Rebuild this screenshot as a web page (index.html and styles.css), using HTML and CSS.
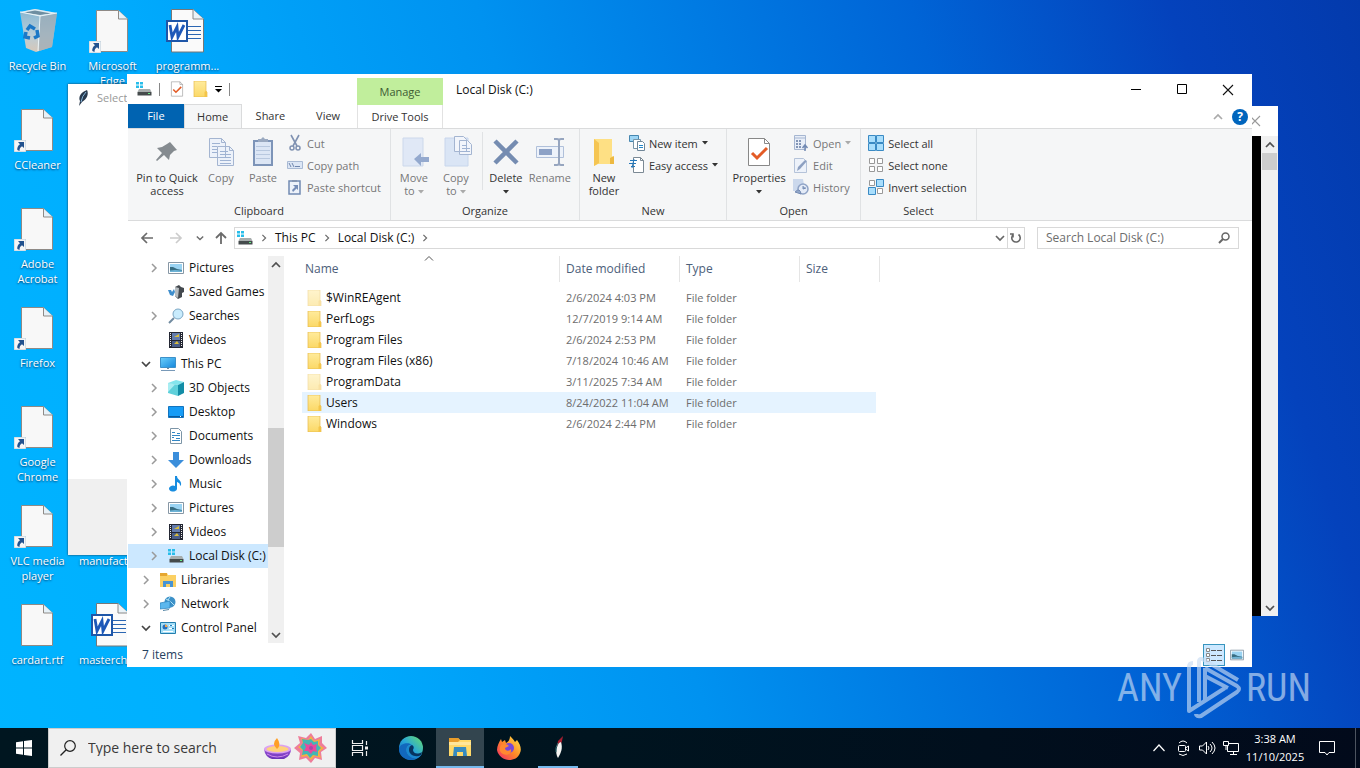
FILE: index.html
```html
<!DOCTYPE html>
<html lang="en">
<head>
<meta charset="utf-8">
<title>Local Disk (C:)</title>
<link rel="stylesheet" href="styles.css">
</head>
<body>
<svg class="defs" aria-hidden="true">
  <defs>
    <linearGradient id="gBlue" x1="0" y1="0" x2="1" y2="1"><stop offset="0" stop-color="#6cd0fb"/><stop offset="1" stop-color="#1687dc"/></linearGradient>
    <linearGradient id="gFolder" x1="0" y1="0" x2="0" y2="1"><stop offset="0" stop-color="#ffeb9c"/><stop offset="1" stop-color="#fbd866"/></linearGradient>
    <linearGradient id="gBin" x1="0" y1="0" x2="0" y2="1"><stop offset="0" stop-color="#8cb6cf"/><stop offset=".6" stop-color="#c3cfd6"/><stop offset="1" stop-color="#e2c9b5"/></linearGradient>
    <linearGradient id="gEdge" x1="0" y1="1" x2="1" y2="0"><stop offset="0" stop-color="#0f5fb8"/><stop offset=".5" stop-color="#27a6d8"/><stop offset="1" stop-color="#6be06a"/></linearGradient>
    <linearGradient id="gFox" x1="1" y1="0" x2="0" y2="1"><stop offset="0" stop-color="#ffe84a"/><stop offset=".5" stop-color="#ff8a28"/><stop offset="1" stop-color="#f0246c"/></linearGradient>
    <linearGradient id="gBowl" x1="0" y1="0" x2="0" y2="1"><stop offset="0" stop-color="#a65ce0"/><stop offset="1" stop-color="#6b34b8"/></linearGradient>
  </defs>
  <symbol id="page" viewBox="6 0 48 44">
    <path d="M13.500 1.500h22l9 8.500v32.500h-31z" fill="#f8f8f8" stroke="#8f8a86"/>
    <path d="M35.500 1.500v8.500h9" fill="#e6f1f8" stroke="#8f8a86"/>
  </symbol>
  <symbol id="arrow" viewBox="0 0 12 12">
    <path d="M0 0h12v12H0z" fill="#f6f6f6" stroke="#b9cbd8"/>
    <path d="M4 2h6v6L8 6.300C6 7.500 5.500 9 5.500 11L3.300 10C3 7.500 4 5.500 6 4.200z" fill="#22528f"/>
  </symbol>
  <symbol id="word" viewBox="6 0 48 44">
    <path d="M13.500 .5h21.500l10.500 9.500v33h-32z" fill="#fafafa" stroke="#777"/>
    <path d="M35 .5v9.500h10.500" fill="#eaf3f8" stroke="#888"/>
    <path d="M30 17.500h13M30 21.500h13M30 25.500h13M30 29.500h13" stroke="#2b66b2"/>
    <path d="M9 12h20v20H9z" fill="#fff" stroke="#1e56a8" stroke-width="2"/>
    <path d="M12 16l2 12 5-10 1 10 6-12" fill="none" stroke="#1d58b8" stroke-width="2.800"/>
  </symbol>
  <symbol id="drive" viewBox="0 0 16 16">
    <path d="M0 1h3v2.500H0zM4 1h3v2.500H4zM0 4.500h3V7H0zM4 4.500h3V7H4z" fill="#28bdea"/>
    <path d="M3 8h11l1.500 3H1.500z" fill="#a7adad"/><path d="M1.500 11H15.500v3.500H1.500z" fill="#454b4c"/><path d="M12 12h2v1h-2z" fill="#66ee85"/>
  </symbol>
  <symbol id="folder" viewBox="0 0 16 16"><path d="M2 0h12v10l1 1v5H2z" fill="url(#gFolder)" stroke="#e6b94c" stroke-width=".7"/><path d="M12.500 16v-5l1-1 1.500 1v5z" fill="#f4c549"/></symbol>
  <symbol id="pic" viewBox="0 0 16 16"><path d="M.5 2.500h15v11H.5z" fill="#fff" stroke="#8797a5"/><path d="M2 4h12v8H2z" fill="#9ad3f2"/><path d="M2 7l3 0 4 2 5 1v2H2z" fill="#376d82"/><path d="M2 10.500l5-.5 7 .5V12H2z" fill="#6db3d6"/></symbol>
  <symbol id="games" viewBox="0 0 16 16"><path d="M7 3l4-2 2 2 3 1v4l-2 1v4l-4 2-3-3z" fill="#43494e"/><path d="M7 3l4 1-1 10-3-2z" fill="#b7bdc1"/><path d="M0 6h3l1 2 2-3 1 3-2 4-3-1z" fill="#3f8ecc"/></symbol>
  <symbol id="search" viewBox="0 0 16 16"><path d="M6 10l-5 5" stroke="#718ba0" stroke-width="2"/><circle cx="10" cy="6" r="5" fill="#c9ecfd" stroke="#7ca7c4"/></symbol>
  <symbol id="video" viewBox="0 0 16 16"><path d="M1 0h14v16H1z" fill="#232733"/><path d="M4 1h8v7H4z" fill="#637cad"/><path d="M4 9h8v6H4z" fill="#4a5e88"/><path d="M6 5l5-3v3zM6 12l3-3 2 3z" fill="#d9be3d"/><path d="M2.500 1v14M13.500 1v14" stroke="#eee" stroke-dasharray="1 1"/></symbol>
  <symbol id="pc" viewBox="0 0 16 16"><path d="M.5 1.500h15v10H.5z" fill="url(#gBlue)" stroke="#3d91c9"/><path d="M7 12h2v1H7z" fill="#789"/><path d="M1 14.500h14" stroke="#7899b8"/></symbol>
  <symbol id="cube" viewBox="0 0 16 16"><path d="M0 3l8-3 8 2-6 3z" fill="#84e5ed"/><path d="M0 3l10 2v11L0 13z" fill="#5fd0da"/><path d="M10 5l6-3v11l-6 3z" fill="#128da6"/><path d="M0 3l7 1.500L0 12z" fill="#a9edf2"/></symbol>
  <symbol id="desk" viewBox="0 0 16 16"><path d="M.5 2.500h15v11H.5z" fill="#169cf6" stroke="#1374be"/><path d="M1 12.500h14" stroke="#095a9d"/><path d="M12 12.500h2" stroke="#fff" stroke-dasharray="1"/></symbol>
  <symbol id="doc" viewBox="0 0 16 16"><path d="M2.500 .5h8l3 3v12h-11z" fill="#fff" stroke="#7c95a7"/><path d="M4 4.500h3M9 5.500h3M4 7.500h8M4 9.500h2M8 10.500h4M4 12.500h8" stroke="#3287c5"/></symbol>
  <symbol id="down" viewBox="0 0 16 16"><path d="M5 0h6v8h5l-8 8-8-8h5z" fill="#3b8edb"/></symbol>
  <symbol id="music" viewBox="0 0 16 16"><path d="M7 0h2c0 4 5 4 4 9l-1 1c0-3-1-3-3-4v7a4 3 0 1 1-2-3z" fill="#188de0"/></symbol>
  <symbol id="lib" viewBox="0 0 16 16"><path d="M0 1h7l1 2h8v12H0z" fill="#fbd063"/><path d="M0 1h7v3H0z" fill="#e6a731"/><path d="M3 9h10v6h-3v-3H6v3H3z" fill="#4794d4"/></symbol>
  <symbol id="net" viewBox="0 0 16 16"><circle cx="10" cy="6" r="5.500" fill="#3c91c8"/><path d="M6 3q4 1 8 6M10 1q-4 4 0 10" stroke="#b3e4f7" fill="none"/><path d="M0 7l10-2v7L0 13z" fill="#5bb7ee" stroke="#2a80bb" stroke-width=".7"/><path d="M3 14.500l6-1" stroke="#5585a5"/></symbol>
  <symbol id="panel" viewBox="0 0 16 16"><path d="M.5 2.500h15v11H.5z" fill="#a4def7" stroke="#237eae"/><circle cx="5" cy="7" r="2.500" fill="#276fbb"/><path d="M5 7V4.500A2.500 2.500 0 0 1 7.500 7z" fill="#f6a548"/><path d="M9 5.500h5M9 8.500h5M3 11.500h10" stroke="#fff"/><path d="M10 5.500h2M12 8.500h2" stroke="#277ebd"/></symbol>
  <symbol id="right" viewBox="0 0 10 10"><path d="M3 1l4 4-4 4" fill="none" stroke="currentColor" stroke-width="1.500"/></symbol>
  <symbol id="dn" viewBox="0 0 10 10"><path d="M1 3l4 4 4-4" fill="none" stroke="currentColor" stroke-width="1.700"/></symbol>
  <symbol id="up" viewBox="0 0 10 10"><path d="M1 7l4-4 4 4" fill="none" stroke="currentColor" stroke-width="1.700"/></symbol>
  <symbol id="x" viewBox="0 0 12 12"><path d="M1 1l10 10M11 1L1 11" fill="none" stroke="currentColor" stroke-width="1.100"/></symbol>
  <symbol id="tri" viewBox="0 0 6 4"><path d="M0 0h6L3 3.500z" fill="currentColor"/></symbol>
  <symbol id="back" viewBox="0 0 14 12"><path d="M13 6H2M7 1L2 6l5 5" fill="none" stroke="currentColor" stroke-width="1.700"/></symbol>
  <symbol id="check" viewBox="0 0 22 30"><path d="M.5 1.500h16l5 5v22H.5z" fill="#fff" stroke="#888"/><path d="M16.500 1.500v5h5" fill="none" stroke="#888"/><path d="M4 16l5 5 10-10" fill="none" stroke="#e35b26" stroke-width="3"/></symbol>
</svg>

<div class="desktop">
  <main class="surface">
    <div class="icons">
      <button class="shortcut"><svg class="art" viewBox="0 0 48 44"><path d="M6 3l15-3 22 4-5 34-16 5-10-4z" fill="url(#gBin)" opacity=".95"/><path d="M6 3l15-3 22 4-17 3z" fill="#dcecf3"/><path d="M10 3.500l11-2 16 3-11 1.500z" fill="#6e8ea1"/><path d="M26 7l17-3-5 34-13 4z" fill="#9ba9b3" opacity=".7"/><path d="M6 3l20 4 17-3M26 7l-2 35" fill="none" stroke="#eaf4f8"/><path d="M13 21l3-4 5 3M23 21l1 6-4 2M16 29l-5-1 1-5" fill="none" stroke="#1c78c6" stroke-width="3.500"/></svg><span>Recycle Bin</span></button>
      <button class="shortcut"><svg class="art"><use href="#page"/><use href="#arrow" x="0" y="32" width="12" height="12"/></svg><span>CCleaner</span></button>
      <button class="shortcut"><svg class="art"><use href="#page"/><use href="#arrow" x="0" y="32" width="12" height="12"/></svg><span>Adobe Acrobat</span></button>
      <button class="shortcut"><svg class="art"><use href="#page"/><use href="#arrow" x="0" y="32" width="12" height="12"/></svg><span>Firefox</span></button>
      <button class="shortcut"><svg class="art"><use href="#page"/><use href="#arrow" x="0" y="32" width="12" height="12"/></svg><span>Google Chrome</span></button>
      <button class="shortcut"><svg class="art"><use href="#page"/><use href="#arrow" x="0" y="32" width="12" height="12"/></svg><span>VLC media player</span></button>
      <button class="shortcut"><svg class="art"><use href="#page"/></svg><span>cardart.rtf</span></button>
      <button class="shortcut col-two"><svg class="art"><use href="#page"/><use href="#arrow" x="0" y="32" width="12" height="12"/></svg><span>Microsoft Edge</span></button>
      <button class="shortcut col-two row-six"><svg class="art"><use href="#page"/></svg><span>manufacturer...</span></button>
      <button class="shortcut col-two row-seven"><svg class="art"><use href="#word"/></svg><span>masterchea...</span></button>
      <button class="shortcut col-three"><svg class="art"><use href="#word"/></svg><span>programm...</span></button>
    </div>

    <section class="tool-window">
      <header><svg class="feather" viewBox="0 0 12 16"><path d="M10 0c2 4 0 9-5 12L2 16l1-5C1 7 4 2 10 0z" fill="#28394d"/><path d="M9 2Q5 6 4 12" stroke="#86b7dc" fill="none"/></svg><span>Select</span></header>
      <div class="tool-body"></div>
    </section>

    <section class="console">
      <header><button aria-label="Close console"><svg class="i12"><use href="#x"/></svg></button></header>
      <div class="console-body"><div class="scroll"><button aria-label="Scroll console up"><svg class="i10"><use href="#up"/></svg></button><div class="console-thumb"></div><button class="scroll-end" aria-label="Scroll console down"><svg class="i10"><use href="#dn"/></svg></button></div></div>
    </section>

    <section class="explorer">
      <header class="head">
        <div class="left-head">
          <div class="quick">
            <svg class="i16"><use href="#drive"/></svg><i class="bar"></i>
            <button aria-label="Properties"><svg class="i16"><use href="#check"/></svg></button>
            <button aria-label="New folder"><svg class="i16"><use href="#folder"/></svg></button>
            <button class="customize" aria-label="Customize Quick Access Toolbar"><svg viewBox="0 0 7 8"><path d="M0 1.500h7" stroke="#000"/><path d="M0 4h7L3.500 7.500z"/></svg></button><i class="bar"></i>
          </div>
          <div class="tabs"><button class="tab file">File</button><button class="tab home">Home</button><button class="tab">Share</button><button class="tab">View</button></div>
        </div>
        <div class="context"><div class="manage">Manage</div><button class="tab drive-tab">Drive Tools</button></div>
        <div class="right-head">
          <div class="title-row"><h1>Local Disk (C:)</h1>
            <div class="controls"><button aria-label="Minimize"><svg class="i12" viewBox="0 0 12 12"><path d="M1 5.500h10" stroke="#000"/></svg></button><button aria-label="Maximize"><svg class="i12" viewBox="0 0 12 12"><path d="M1.500 .5h9v9h-9z" fill="none" stroke="#000"/></svg></button><button aria-label="Close"><svg class="i12"><use href="#x"/></svg></button></div></div>
          <div class="help-row"><button class="collapse" aria-label="Minimize the Ribbon"><svg class="i10"><use href="#up"/></svg></button><button class="help" aria-label="Help">?</button></div>
        </div>
      </header>

      <div class="ribbon">
        <section class="group"><div class="tools">
          <button class="big w-pin"><svg viewBox="0 0 32 32"><path d="M19 6l7 8-3 1-4 4-1 5-5-5-7 6-1-1 6-7-5-5 5-1 5-3z" fill="#858b90"/></svg><span>Pin to Quick access</span></button>
          <button class="big w-copy off"><svg viewBox="0 0 32 32"><path d="M4.500 2.500h12l4 4v15h-16zM12.500 10.500h12l4 4v15h-16z" fill="#edf2fa" stroke="#a4b5d1"/><path d="M7 7.500h8M7 10.500h5M7 13.500h5M7 16.500h5M15 15.500h8M15 18.500h11M15 21.500h11M15 24.500h11M15 27.500h11" stroke="#9fb3d3"/><path d="M16.500 2.500v4h4M24.500 10.500v4h4" fill="none" stroke="#a4b5d1"/></svg><span>Copy</span></button>
          <button class="big w-paste off"><svg viewBox="0 0 32 32"><path d="M7 5h18v24H7z" fill="#dce6f5" stroke="#7d94b8" stroke-width="2"/><path d="M11 6V3h3l2-2 2 2h3v3z" fill="#9aa9c0"/><path d="M9 10.500h14M9 14.500h14M9 18.500h14M9 22.500h14" stroke="#b8c8df"/></svg><span>Paste</span></button>
          <div class="stack">
            <button class="small off"><svg class="i16" viewBox="0 0 16 16"><path d="M4 0l6 11M12 0L6 11" stroke="#8092b2" stroke-width="1.600"/><circle cx="5" cy="13" r="2" fill="none" stroke="#8092b2" stroke-width="1.500"/><circle cx="11" cy="13" r="2" fill="none" stroke="#8092b2" stroke-width="1.500"/></svg>Cut</button>
            <button class="small off"><svg class="i16" viewBox="0 0 16 16"><path d="M.5 4.500h15v7H.5z" fill="#dce6f5" stroke="#a9bad4"/><path d="M2 6l2 4M5 6l2 4M8 9.500h6" stroke="#6f86ae" stroke-dasharray="5 1"/></svg>Copy path</button>
            <button class="small off"><svg class="i16" viewBox="0 0 16 16"><path d="M2 2h11v13H2z" fill="#edf2fa" stroke="#718ab2" stroke-width="1.500"/><path d="M5 1h5v2H5z" fill="#8596b2"/><path d="M6 6h5v5L9.500 9.500 6 13l-1-2 3-3z" fill="#758db7"/></svg>Paste shortcut</button>
          </div></div><h2>Clipboard</h2></section>

        <section class="group"><div class="tools pad-organize">
          <button class="big w-move off"><svg viewBox="0 0 32 32"><path d="M5 2h20v28H5z" fill="#e0e8f6" stroke="#ccd8eb"/><path d="M16 23l7-6v4h8v5h-8v4z" fill="#94a9ce"/></svg><span>Move<br>to <svg class="tri"><use href="#tri"/></svg></span></button>
          <button class="big w-move off"><svg viewBox="0 0 32 32"><path d="M5 2h23v28H5z" fill="#dae5f5" stroke="#c8d6ec"/><path d="M14.500 .5h9l3 3v12h-12zM19.500 4.500h8l4 4v10h-12z" fill="#f2f5fb" stroke="#a4b5d1"/><path d="M22 9.500h5M22 12.500h8M22 15.500h8" stroke="#9fb3d3"/></svg><span>Copy<br>to <svg class="tri"><use href="#tri"/></svg></span></button>
          <i class="divider"></i>
          <button class="big w-delete"><svg viewBox="0 0 32 32"><path d="M5 5l22 22M27 5L5 27" stroke="#758cb1" stroke-width="4.500"/></svg><span>Delete<br><svg class="tri"><use href="#tri"/></svg></span></button>
          <button class="big w-move off"><svg viewBox="0 0 32 32"><path d="M2.500 10.500h27v11h-27z" fill="#edf2fa" stroke="#b0c0da"/><path d="M5 13h13v6H5z" fill="#8ca1c6"/><path d="M20 3h3q2 0 2 2v22q0 2-2 2h-3M30 3h-3q-2 0-2 2M25 27q0 2 2 2h3" stroke="#96a5bf" fill="none" stroke-width="2"/></svg><span>Rename</span></button>
          </div><h2>Organize</h2></section>

        <section class="group"><div class="tools">
          <button class="big w-folder"><svg viewBox="0 0 32 32"><path d="M6 3h18v17l2 2v6H10l-4 2z" fill="#fee084"/><path d="M6 3l5 4v20l-5 3z" fill="#f5c553"/><path d="M22 22l4-2v8h-4z" fill="#edb941"/></svg><span>New folder</span></button>
          <div class="stack pad-new">
            <button class="small"><svg class="i16" viewBox="0 0 16 16"><path d="M.5 .5h9v6h-9z" fill="#9dd5f5" stroke="#4687b0"/><path d="M4.500 4.500h7v9h-7z" fill="#fff" stroke="#7695a8"/><path d="M8.500 6.500h5l2 2v7h-7z" fill="#fff" stroke="#708698"/><path d="M10 10.500h4M10 12.500h4" stroke="#2587c9"/></svg>New item<svg class="tri"><use href="#tri"/></svg></button>
            <button class="small"><svg class="i16" viewBox="0 0 16 16"><path d="M4.500 .5h7l3 3v12h-10z" fill="#fff" stroke="#7b8994"/><path d="M11.500 .5v3h3" fill="none" stroke="#7b8994"/><path d="M1 3.500h7M0 6.500h7M2 9.500h4M5 2l-2 9" stroke="#2678b9"/></svg>Easy access<svg class="tri"><use href="#tri"/></svg></button>
          </div></div><h2>New</h2></section>

        <section class="group"><div class="tools">
          <button class="big w-properties"><svg class="property"><use href="#check"/></svg><span>Properties<br><svg class="tri"><use href="#tri"/></svg></span></button>
          <div class="stack pad-open">
            <button class="small off"><svg class="i16" viewBox="0 0 16 16"><path d="M1.500 .5h11v14h-11z" fill="#e8eef8" stroke="#a6b6d1"/><path d="M2 3h10" stroke="#a6b6d1"/><path d="M4 5v8M7 5v8" stroke="#8396b7" stroke-width="2" stroke-dasharray="2 1"/><path d="M12 16v-5M9.500 13l2.500-3 2.500 3" fill="none" stroke="#7189b3" stroke-width="1.500"/></svg>Open<svg class="tri"><use href="#tri"/></svg></button>
            <button class="small off"><svg class="i16" viewBox="0 0 16 16"><path d="M1.500 1.500h9l3 3v11h-12z" fill="#edf2fa" stroke="#b5c3d9"/><path d="M14 4l-7 8-3 2 1-4 7-7z" fill="#8da0c1"/></svg>Edit</button>
            <button class="small off"><svg class="i16" viewBox="0 0 16 16"><path d="M0 0h10l2 12H0z" fill="#cbd8ec"/><circle cx="10" cy="10" r="5" fill="#e4ebf7" stroke="#8fa3c6" stroke-width="1.500"/><path d="M10 7v3l3-1M2 13q5-5 6 2z" stroke="#768cb3" fill="#91a7ca"/></svg>History</button>
          </div></div><h2>Open</h2></section>

        <section class="group"><div class="tools"><div class="stack pad-select">
          <button class="small"><svg class="i16" viewBox="0 0 16 16"><path d="M.5 .5h7v7h-7zM8.500 .5h7v7h-7zM.5 8.500h7v7h-7zM8.500 8.500h7v7h-7z" fill="#a9defc" stroke="#3a8ac4"/></svg>Select all</button>
          <button class="small"><svg class="i16" viewBox="0 0 16 16"><path d="M1.500 1.500h5v5h-5zM9.500 1.500h5v5h-5zM1.500 9.500h5v5h-5zM9.500 9.500h5v5h-5z" fill="#fff" stroke="#999"/></svg>Select none</button>
          <button class="small"><svg class="i16" viewBox="0 0 16 16"><path d="M1.500 1.500h5v5h-5zM9.500 9.500h5v5h-5z" fill="#fff" stroke="#999"/><path d="M8.500 .5h7v7h-7zM.5 8.500h7v7h-7z" fill="#a9defc" stroke="#3a8ac4"/></svg>Invert selection</button>
        </div></div><h2>Select</h2></section>
      </div>

      <div class="address-row">
        <button class="nav-button" aria-label="Back"><svg class="arrow"><use href="#back"/></svg></button>
        <button class="nav-button forward" aria-label="Forward"><svg class="arrow" viewBox="0 0 14 12"><path d="M1 6h11M7 1l5 5-5 5" fill="none" stroke="currentColor" stroke-width="1.700"/></svg></button>
        <button class="recent" aria-label="Recent locations"><svg class="i8"><use href="#dn"/></svg></button>
        <button class="upward" aria-label="Up"><svg class="arrow" viewBox="0 0 14 12"><path d="M7 12V1M2 6l5-5 5 5" fill="none" stroke="#6b6b6b" stroke-width="1.800"/></svg></button>
        <div class="address"><svg class="i16"><use href="#drive"/></svg><svg class="i8"><use href="#right"/></svg><button>This PC</button><svg class="i8"><use href="#right"/></svg><button>Local Disk (C:)</button><svg class="i8"><use href="#right"/></svg><button class="history" aria-label="Previous Locations"><svg class="i10"><use href="#dn"/></svg></button><button class="refresh" aria-label="Refresh"><svg class="i12" viewBox="0 0 12 12"><path d="M8.500 2.500a4.200 4.200 0 1 1-5 0M3 5.500V2H0" fill="none" stroke="#666" stroke-width="1.600"/></svg></button></div>
        <label class="find"><input aria-label="Search Local Disk (C:)" placeholder="Search Local Disk (C:)"><svg class="i12" viewBox="0 0 12 12"><circle cx="7.500" cy="4.500" r="3.500" fill="none" stroke="#666" stroke-width="1.500"/><path d="M5 7l-4 4" stroke="#666" stroke-width="2"/></svg></label>
      </div>

      <div class="browser">
        <nav class="sidebar"><div class="tree">
          <a href="#p" class="sub"><svg class="i10"><use href="#right"/></svg><svg class="i16"><use href="#pic"/></svg>Pictures</a>
          <a href="#p" class="sub"><svg class="i10"></svg><svg class="i16"><use href="#games"/></svg>Saved Games</a>
          <a href="#p" class="sub"><svg class="i10"><use href="#right"/></svg><svg class="i16"><use href="#search"/></svg>Searches</a>
          <a href="#p" class="sub"><svg class="i10"></svg><svg class="i16"><use href="#video"/></svg>Videos</a>
          <a href="#p" class="open"><svg class="i10"><use href="#dn"/></svg><svg class="i16"><use href="#pc"/></svg>This PC</a>
          <a href="#p" class="sub"><svg class="i10"><use href="#right"/></svg><svg class="i16"><use href="#cube"/></svg>3D Objects</a>
          <a href="#p" class="sub"><svg class="i10"><use href="#right"/></svg><svg class="i16"><use href="#desk"/></svg>Desktop</a>
          <a href="#p" class="sub"><svg class="i10"><use href="#right"/></svg><svg class="i16"><use href="#doc"/></svg>Documents</a>
          <a href="#p" class="sub"><svg class="i10"><use href="#right"/></svg><svg class="i16"><use href="#down"/></svg>Downloads</a>
          <a href="#p" class="sub"><svg class="i10"><use href="#right"/></svg><svg class="i16"><use href="#music"/></svg>Music</a>
          <a href="#p" class="sub"><svg class="i10"><use href="#right"/></svg><svg class="i16"><use href="#pic"/></svg>Pictures</a>
          <a href="#p" class="sub"><svg class="i10"><use href="#right"/></svg><svg class="i16"><use href="#video"/></svg>Videos</a>
          <a href="#p" class="sub current"><svg class="i10"><use href="#right"/></svg><svg class="i16"><use href="#drive"/></svg>Local Disk (C:)</a>
          <a href="#p"><svg class="i10"><use href="#right"/></svg><svg class="i16"><use href="#lib"/></svg>Libraries</a>
          <a href="#p"><svg class="i10"><use href="#right"/></svg><svg class="i16"><use href="#net"/></svg>Network</a>
          <a href="#p" class="open"><svg class="i10"><use href="#dn"/></svg><svg class="i16"><use href="#panel"/></svg>Control Panel</a>
        </div><div class="scroll"><button aria-label="Scroll up"><svg class="i10"><use href="#up"/></svg></button><div class="thumb"></div><button class="scroll-end" aria-label="Scroll down"><svg class="i10"><use href="#dn"/></svg></button></div></nav>
        <div class="files"><table>
          <colgroup><col class="c-name"><col class="c-mid"><col class="c-mid"><col class="c-size"></colgroup>
          <thead><tr><th>Name<svg class="sort" viewBox="0 0 8 5"><path d="M0 4.500l4-4 4 4" fill="none" stroke="#555"/></svg></th><th>Date modified</th><th>Type</th><th>Size</th></tr></thead>
          <tbody>
            <tr><td class="hidden-item"><svg class="i16"><use href="#folder"/></svg>$WinREAgent</td><td>2/6/2024 4:03 PM</td><td>File folder</td><td></td></tr>
            <tr><td><svg class="i16"><use href="#folder"/></svg>PerfLogs</td><td>12/7/2019 9:14 AM</td><td>File folder</td><td></td></tr>
            <tr><td><svg class="i16"><use href="#folder"/></svg>Program Files</td><td>2/6/2024 2:53 PM</td><td>File folder</td><td></td></tr>
            <tr><td><svg class="i16"><use href="#folder"/></svg>Program Files (x86)</td><td>7/18/2024 10:46 AM</td><td>File folder</td><td></td></tr>
            <tr><td class="hidden-item"><svg class="i16"><use href="#folder"/></svg>ProgramData</td><td>3/11/2025 7:34 AM</td><td>File folder</td><td></td></tr>
            <tr class="hover"><td><svg class="i16"><use href="#folder"/></svg>Users</td><td>8/24/2022 11:04 AM</td><td>File folder</td><td></td></tr>
            <tr><td><svg class="i16"><use href="#folder"/></svg>Windows</td><td>2/6/2024 2:44 PM</td><td>File folder</td><td></td></tr>
          </tbody></table></div>
      </div>
      <footer class="status"><span>7 items</span><div class="views"><button class="details" aria-label="Details view"><svg class="i16" viewBox="0 0 16 16"><path d="M.5 1.500h3v3h-3zM.5 6.500h3v3h-3zM.5 11.500h3v3h-3z" fill="#fff" stroke="#888"/><path d="M5 3.500h11M5 8.500h11M5 13.500h11" stroke="#555" stroke-dasharray="5 1"/></svg></button><button aria-label="Large icons view"><svg class="i14"><use href="#pic"/></svg></button></div></footer>
    </section>

    <div class="watermark"><span>ANY</span><svg viewBox="0 0 56 64"><g fill="none" stroke="currentColor" stroke-width="4" stroke-linejoin="round"><path d="M13 46V6q0-5 5-2l34 20M7 7q-4 0-4 4v44l36-23"/><path d="M19 12l32 18q4 3 0 6L15 60q-5 1-5-2M19 12v32M19 20l23 12"/></g></svg><span>RUN</span></div>
  </main>

  <footer class="taskbar">
    <button class="task start" aria-label="Start"><svg class="i16" viewBox="0 0 16 16"><path d="M0 2.200l7-1v6.300H0zM8 1l8-1v7.500H8zM0 8.500h7v6.300l-7-1zM8 8.500h8V16l-8-1z" fill="#fff"/></svg></button>
    <label class="task-search"><svg class="i16" viewBox="0 0 16 16"><circle cx="10" cy="6" r="5.300" fill="none" stroke="#222" stroke-width="1.200"/><path d="M6.200 9.800L.5 15.500" stroke="#222" stroke-width="1.300"/></svg><input aria-label="Type here to search" placeholder="Type here to search">
      <svg class="diya" viewBox="0 0 64 32"><path d="M1 17q13-5 27 0q0 7-7 10h-12q-7-2-8-10z" fill="url(#gBowl)"/><ellipse cx="14.500" cy="17" rx="13.500" ry="4.500" fill="#dca3ef"/><ellipse cx="14.500" cy="17" rx="11" ry="3" fill="#ffd27a"/><path d="M14 17q-6-5 0-11q5 7 0 11z" fill="#ff9f26"/><path d="M4 22q10 6 21 0" stroke="#cf8bec" fill="none"/><g transform="translate(48 16)"><path d="M0-15l4 6 7-3v7l5 5-6 4 1 8-7-2-4 5-5-5-7 2 1-7-6-5 6-5-2-7 8 2z" fill="#ee7d9a"/><path d="M0-12l3 5 6-2-1 6 5 3-5 4 2 6-6-2-4 4-4-4-6 1 2-6-5-4 5-3-2-6 7 2z" fill="#f6b13e"/><path d="M0-9l3 3 4-1v4l3 3-3 3v5l-5-1-3 3-3-4-5 1 1-5-3-3 3-4-1-4 6 1z" fill="#43b6b4"/><path d="M0-6l2 3 4-1-1 4 1 4-4-1-2 3-3-3-4 0 2-4-2-4 5 2z" fill="#e7499d"/><circle r="2" fill="#a746a9"/></g></svg></label>
    <button class="task view" aria-label="Task View"><svg class="i18" viewBox="0 0 18 18"><path d="M1.500 1v3.500h10V1M1.500 17v-3.500h10V17M1.500 6.500h10v5h-10zM15.500 2v4M15.500 12v5" fill="none" stroke="#eee" stroke-width="1.200"/><path d="M14 7.500h3v3h-3z" fill="#eee"/></svg></button>
    <button class="task gap" aria-label="Microsoft Edge"><svg class="i24" viewBox="0 0 24 24"><circle cx="12" cy="12" r="12" fill="url(#gEdge)"/><path d="M0 12C2 7 10 6 13 9c-4-1-7 3-5 8 2 4 6 6 11 5-8 5-20 0-19-10z" fill="#1268bd"/><path d="M13 9c-5 0-6 4-5 8 2 4 6 6 11 5 2-1 3-3 4-4-4 2-10 1-9-4 1-1 2-3-1-5z" fill="#1b87cf"/><path d="M13 9c3 2 1 4 1 5 0 3 4 5 9 2l-1 3c-5 3-12 0-12-5 0-3 1-4 3-5z" fill="#07345f"/></svg></button>
    <button class="task active" aria-label="File Explorer"><svg class="i24" viewBox="0 0 24 24"><path d="M1 3h9l2 2h11v16H1z" fill="#ffd969"/><path d="M1 3h9l2 2-2 2H1z" fill="#e99d2a"/><path d="M1 7h22v3H1z" fill="#ffe69a"/><path d="M6 12h12l1 9h-4v-4H9v4H5z" fill="#378bbf"/></svg></button>
    <button class="task" aria-label="Firefox"><svg class="i24" viewBox="0 0 24 24"><path d="M13 0c2 2 4 4 5 6l2-2c3 4 5 9 3 13-2 5-6 7-11 7S1 20 0 14C0 10 2 6 4 3l1 3 3-2 1 3c2-1 4-3 4-7z" fill="url(#gFox)"/><circle cx="12" cy="12" r="5" fill="#7848d8"/><path d="M4 9c4-2 6-1 8 1l-4 2c0 3 4 4 6 1 1 5-4 7-8 5-4-2-4-6-2-9z" fill="#ff8930"/></svg></button>
    <button class="task running" aria-label="Python application"><svg class="i24" viewBox="0 0 24 24"><path d="M17 1l-5 5-1 5 3 1 2-6z" fill="#a81e30"/><path d="M15 7c2 6 0 11-3 16-2-3-3-9 1-15z" fill="#f5f5f2"/><path d="M12 8q-3 5-2 9" stroke="#336f73" fill="none"/></svg></button>
    <div class="tray">
      <button aria-label="Show hidden icons"><svg class="i12" viewBox="0 0 12 12"><path d="M.5 9L6 3l5.500 6" fill="none" stroke="#fff" stroke-width="1.200"/></svg></button>
      <button aria-label="Meet Now"><svg class="i16" viewBox="0 0 16 16"><rect x="3.500" y="5.500" width="7" height="6" rx="1" fill="none" stroke="#fff"/><path d="M10.500 8l3-2v5l-3-2M4 3q4-4 8 0M4 14q4 3 8 0" fill="none" stroke="#fff"/></svg></button>
      <button aria-label="Volume"><svg class="i16" viewBox="0 0 16 16"><path d="M.5 6h3l4-4v12l-4-4h-3zM9 6q2 2 0 4M11 4q4 4 0 8M13 2q6 6 0 12" fill="none" stroke="#fff"/></svg></button>
      <button aria-label="Network"><svg class="i16" viewBox="0 0 16 16"><path d="M6 3.500h9.500v8H4.500V6M7 14.500h7M10.500 12v3M.5 1.500h5v4h-5zM3 6v4" fill="none" stroke="#fff"/></svg></button>
      <time><span>3:38 AM</span><span>11/10/2025</span></time>
      <button class="note" aria-label="Notifications"><svg class="i16" viewBox="0 0 16 16"><path d="M.5 1.500h15v11H10L8 15l-2-2.500H.5z" fill="none" stroke="#fff"/></svg></button>
    </div>
  </footer>
</div>
</body>
</html>
```
FILE: styles.css
```css
* { box-sizing: border-box; }
body { margin: 0; font: 12px/16px "Open Sans", "Noto Sans", sans-serif; color: #111; }
button, input { margin: 0; padding: 0; border: 0; background: none; font: inherit; color: inherit; }
a { color: inherit; text-decoration: none; }
h1, h2 { margin: 0; font: inherit; }
svg { flex: none; overflow: visible; }
.defs { position: absolute; width: 0; height: 0; }
.i8 { width: 8px; height: 8px; }
.i10 { width: 10px; height: 10px; }
.i12 { width: 12px; height: 12px; }
.i14 { width: 14px; height: 14px; }
.i16 { width: 16px; height: 16px; }
.i18 { width: 18px; height: 18px; }
.i24 { width: 24px; height: 24px; }

.desktop {
  display: flex; flex-direction: column; height: 100vh; overflow: hidden;
  background: linear-gradient(72deg, #00b4ff 0%, #00aeff 20%, #0092f0 45%, #0064d6 72%, #0442bc 88%, #033aac 100%);
}
.surface { position: relative; flex: 1; min-height: 0; }
.icons { display: grid; grid-auto-flow: column; grid-template-rows: repeat(7, 99px); grid-template-columns: repeat(3, 75px); padding-top: 9px; }
.col-two { grid-column: 2; grid-row: 1; }
.col-three { grid-column: 3; grid-row: 1; }
.row-six { grid-row: 6; }
.row-seven { grid-row: 7; }
.shortcut { display: flex; flex-direction: column; align-items: center; justify-content: flex-start; gap: 5px; color: #fff; font-size: 11px; line-height: 15px; text-shadow: 0 1px 2px #003a6c; }
.art { width: 48px; height: 44px; }
.shortcut span { max-width: 70px; padding: 0 2px; }
.row-six span, .row-seven span { max-width: 71px; overflow: hidden; white-space: nowrap; }

.tool-window { position: absolute; left: 68px; top: 84px; width: 40%; bottom: 173px; display: flex; flex-direction: column; background: #fff; box-shadow: 0 0 2px #234; }
.tool-window header { display: flex; gap: 8px; align-items: center; height: 28px; padding-left: 9px; color: #999; font-size: 11px; }
.feather { width: 12px; height: 16px; }
.tool-body { margin-top: auto; height: 76px; background: #f0f0f0; }
.console { position: absolute; left: 50%; right: 82px; top: 106px; bottom: 112px; display: flex; flex-direction: column; background: #fff; }
.console header { display: flex; justify-content: flex-end; align-items: center; height: 30px; padding-right: 17px; color: #999; }
.console header button { display: flex; }
.console-body { display: flex; justify-content: flex-end; flex: 1; background: #000; }
.scroll { display: flex; flex-direction: column; width: 16px; background: #f0f0f0; color: #505050; }
.console .scroll { width: 17px; }
.scroll button { display: flex; align-items: center; justify-content: center; height: 17px; }
.scroll-end { margin-top: auto; }
.console-thumb { height: 17px; margin: 0 1px; background: #cdcdcd; }

.explorer { position: absolute; left: 127px; top: 74px; right: 108px; bottom: 61px; display: flex; flex-direction: column; padding-left: 1px; background: #fff; }
.head { display: flex; height: 55px; border-bottom: 1px solid #dadbdc; }
.left-head { display: flex; flex-direction: column; width: 229px; }
.quick { display: flex; align-items: center; gap: 7px; height: 31px; padding-left: 8px; }
.quick button { display: flex; }
.bar { width: 1px; height: 13px; margin: 0 2px 0 0; background: #888; }
.customize svg { width: 7px; height: 8px; }
.tabs { display: flex; height: 24px; }
.tab { width: 58px; font-size: 11px; color: #333; }
.file { width: 56px; background: #0063b1; color: #fff; }
.home { background: #f5f6f7; border: 1px solid #dadbdc; border-bottom: 0; }
.context { display: flex; flex-direction: column; width: 86px; padding-top: 4px; }
.manage { display: grid; place-items: center; height: 27px; background: #c1ee9c; font-size: 11px; color: #3d5b33; }
.drive-tab { width: 86px; height: 23px; border: solid #e2e2e2; border-width: 0 1px; }
.right-head { display: flex; flex-direction: column; flex: 1; }
.title-row { display: flex; justify-content: space-between; align-items: center; height: 31px; padding: 0 1px 0 13px; }
.controls { display: flex; height: 100%; }
.controls button { display: grid; place-items: center; width: 46px; }
.help-row { display: flex; align-items: center; justify-content: flex-end; gap: 9px; height: 23px; padding-right: 4px; }
.collapse { display: flex; color: #aaa; }
.help { width: 16px; height: 16px; border-radius: 50%; background: #0065bd; color: #fff; font-weight: 700; font-size: 12px; line-height: 16px; }

.ribbon { display: flex; height: 92px; background: #f5f6f7; border-bottom: 1px solid #dadbdc; color: #333; font-size: 11px; line-height: 13px; }
.group { display: flex; flex-direction: column; padding: 3px 0 1px; border-right: 1px solid #e0e2e4; }
.group h2 { margin-top: auto; line-height: 16px; text-align: center; }
.tools { display: flex; padding-left: 3px; }
.pad-organize { padding: 0 8px 0 2px; }
.big { display: flex; flex-direction: column; align-items: center; gap: 3px; padding-top: 4px; white-space: normal; }
.big > svg { width: 32px; height: 32px; }
.big > .property { width: 22px; }
.off { color: #777; }
.tri { display: inline-block; width: 6px; height: 4px; vertical-align: middle; }
.off .tri { color: #aaa; }
.w-pin { width: 72px; }
.w-copy { width: 36px; }
.w-paste { width: 48px; }
.w-move { width: 42px; }
.w-delete { width: 46px; }
.w-folder { width: 42px; }
.w-properties { width: 58px; }
.divider { width: 1px; height: 58px; margin: 0 0 0 5px; background: #e0e2e4; }
.stack { display: flex; flex-direction: column; padding-right: 9px; }
.small { display: flex; align-items: center; gap: 4px; height: 22px; white-space: nowrap; }
.pad-new { padding: 0 8px 0 4px; }
.pad-open { padding-left: 5px; }
.pad-select { padding-left: 4px; }

.address-row { display: flex; align-items: center; height: 35px; padding: 0 13px 2px 12px; color: #6b6b6b; }
.address-row button { display: flex; align-items: center; }
.arrow { width: 14px; height: 12px; }
.nav-button { width: 29px; }
.forward { width: 27px; color: #ccc; }
.recent { width: 18px; }
.upward { width: 20px; }
.address { display: flex; flex: 1; align-items: center; gap: 7px; height: 22px; padding-left: 2px; border: 1px solid #d9d9d9; }
.address button { color: #111; }
.address .history { margin-left: auto; color: #666; }
.address .refresh { height: 20px; padding: 0 2px; border-left: 1px solid #d9d9d9; }
.address .history + .refresh { margin-left: -5px; }
.find { display: flex; align-items: center; width: 202px; height: 22px; margin-left: 12px; padding: 0 8px; border: 1px solid #d9d9d9; }
input { flex: 1; min-width: 0; outline: 0; }
input::placeholder { color: #6d6d6d; opacity: 1; }

.browser { display: flex; flex: 1; min-height: 0; }
.sidebar { display: flex; width: 156px; }
.tree { width: 140px; overflow: hidden; }
.tree a { display: flex; align-items: center; gap: 5px; height: 24px; padding-left: 13px; white-space: nowrap; color: #111; }
.tree .sub { padding-left: 21px; }
.tree svg:first-child { color: #9a9a9a; margin-right: 4px; }
.tree .open svg:first-child { color: #444; }
.tree .current { background: #cce8ff; }
.thumb { height: 119px; margin-top: 155px; background: #cdcdcd; }
.files { flex: 1; padding-left: 18px; }
table { table-layout: fixed; width: 578px; border-collapse: separate; border-spacing: 0; }
.c-name { width: 258px; }
.c-mid { width: 120px; }
.c-size { width: 80px; }
th { position: relative; height: 26px; padding: 0 6px; border-right: 1px solid #e5e5e5; text-align: left; font-weight: 400; color: #4c607a; }
th:first-child { padding-left: 3px; }
.sort { position: absolute; left: 48%; top: 0; width: 8px; height: 5px; }
tbody::before { content: ""; display: block; height: 5px; }
td { height: 21px; padding: 0 6px; color: #6d6d6d; font-size: 11px; white-space: nowrap; line-height: 16px; }
td:first-child { display: flex; align-items: center; gap: 4px; padding-left: 4px; font-size: 12px; color: #111; }
td:last-child { border-right: 4px solid transparent; background-clip: padding-box; }
.hidden-item svg { opacity: .5; }
.hover td { background-color: #e5f3ff; }
.status { display: flex; align-items: center; justify-content: space-between; height: 24px; padding: 0 8px 0 14px; color: #26415f; }
.views { display: flex; gap: 5px; }
.views button { display: flex; align-items: center; }
.views .details { width: 22px; height: 22px; justify-content: center; background: #cce8ff; border: 1px solid #3895bf; }

.watermark { position: absolute; right: 49px; bottom: 8px; display: flex; align-items: center; gap: 4px; color: #c8dcf4; opacity: .65; font: 38px/48px "Liberation Sans Narrow", "Roboto Condensed", Roboto, sans-serif; }
.watermark svg { width: 56px; height: 64px; }

.taskbar { display: flex; flex: none; height: 40px; background: linear-gradient(90deg, #001620, #00141f 45%, #020a1b); color: #fff; }
.task { display: flex; align-items: center; justify-content: center; width: 48px; }
.task-search { display: flex; align-items: center; gap: 12px; width: 288px; padding: 0 8px 0 11px; background: #f0f0f0; border: 1px solid #ccc; color: #333; font-size: 14px; }
.task-search input::placeholder { color: #3a3a3a; }
.diya { width: 64px; height: 32px; }
.gap { margin-left: 3px; }
.active { margin-left: 1px; background: #33454f; border-bottom: 2px solid #76b9ed; }
.active + .task { width: 50px; }
.task + .running { margin-left: 4px; width: 40px; border-bottom: 2px solid #76b9ed; }
.tray { display: flex; align-items: center; margin-left: auto; border-right: 1px solid #4d5460; margin-right: 4px; }
.tray button { display: grid; place-items: center; width: 24px; height: 40px; }
.tray time { display: flex; flex-direction: column; width: 64px; text-align: center; font-size: 11px; line-height: 18px; }
.tray .note { width: 48px; padding-right: 8px; }
```
